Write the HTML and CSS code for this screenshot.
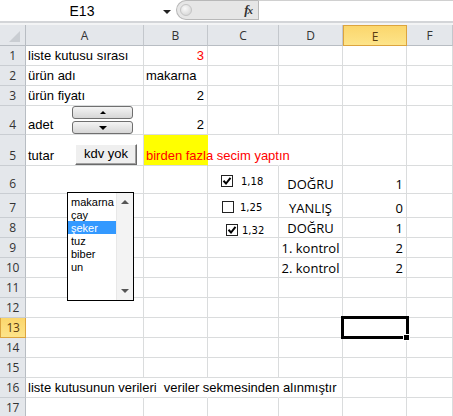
FILE: index.html
```html
<!DOCTYPE html>
<html lang="tr">
<head>
<meta charset="utf-8">
<title>Sheet</title>
<link rel="stylesheet" href="styles.css">
</head>
<body>
<div class="app">
  <div class="toolbar">
    <div class="namebox"><span class="nb-text">E13</span><span class="nb-arrow"></span></div>
    <div class="fxarea"><span class="knob"></span><span class="fx">f<span class="fxx">x</span></span></div>
    <div class="formula"></div>
  </div>
  <div class="sheet">
    <div class="row hdr">
      <div class="corner"><svg width="25" height="20" viewBox="0 0 25 20"><polygon points="20,6 20,17 9,17" fill="#c9cdd2"/></svg></div>
      <div class="ch">A</div><div class="ch">B</div><div class="ch">C</div><div class="ch">D</div><div class="ch sel">E</div><div class="ch">F</div>
    </div>
    <div class="row h20">
      <div class="rh">1</div><div class="c">liste kutusu sırası</div><div class="c num red">3</div><div class="c"></div><div class="c"></div><div class="c"></div><div class="c"></div>
    </div>
    <div class="row h20">
      <div class="rh">2</div><div class="c">ürün adı</div><div class="c">makarna</div><div class="c"></div><div class="c"></div><div class="c"></div><div class="c"></div>
    </div>
    <div class="row h20">
      <div class="rh">3</div><div class="c">ürün fiyatı</div><div class="c num">2</div><div class="c"></div><div class="c"></div><div class="c"></div><div class="c"></div>
    </div>
    <div class="row h29">
      <div class="rh">4</div><div class="c">adet</div><div class="c num">2</div><div class="c"></div><div class="c"></div><div class="c"></div><div class="c"></div>
    </div>
    <div class="row h31">
      <div class="rh">5</div><div class="c">tutar</div><div class="c yellow red nob">birden fazla secim yaptın</div><div class="c nob"></div><div class="c"></div><div class="c"></div><div class="c"></div>
    </div>
    <div class="row h28">
      <div class="rh">6</div><div class="c"></div><div class="c"></div><div class="c"></div><div class="c ctr cal">DOĞRU</div><div class="c num cal">1</div><div class="c"></div>
    </div>
    <div class="row h24">
      <div class="rh">7</div><div class="c"></div><div class="c"></div><div class="c"></div><div class="c ctr cal">YANLIŞ</div><div class="c num cal">0</div><div class="c"></div>
    </div>
    <div class="row h20">
      <div class="rh">8</div><div class="c"></div><div class="c"></div><div class="c"></div><div class="c ctr cal">DOĞRU</div><div class="c num cal">1</div><div class="c"></div>
    </div>
    <div class="row h20">
      <div class="rh">9</div><div class="c"></div><div class="c"></div><div class="c"></div><div class="c ctr cal">1. kontrol</div><div class="c num cal">2</div><div class="c"></div>
    </div>
    <div class="row h20">
      <div class="rh">10</div><div class="c"></div><div class="c"></div><div class="c"></div><div class="c ctr cal">2. kontrol</div><div class="c num cal">2</div><div class="c"></div>
    </div>
    <div class="row h20">
      <div class="rh">11</div><div class="c"></div><div class="c"></div><div class="c"></div><div class="c"></div><div class="c"></div><div class="c"></div>
    </div>
    <div class="row h20">
      <div class="rh">12</div><div class="c"></div><div class="c"></div><div class="c"></div><div class="c"></div><div class="c"></div><div class="c"></div>
    </div>
    <div class="row h20">
      <div class="rh sel">13</div><div class="c"></div><div class="c"></div><div class="c"></div><div class="c"></div><div class="c"></div><div class="c"></div>
    </div>
    <div class="row h20">
      <div class="rh">14</div><div class="c"></div><div class="c"></div><div class="c"></div><div class="c"></div><div class="c"></div><div class="c"></div>
    </div>
    <div class="row h20">
      <div class="rh">15</div><div class="c"></div><div class="c"></div><div class="c"></div><div class="c"></div><div class="c"></div><div class="c"></div>
    </div>
    <div class="row h20">
      <div class="rh">16</div><div class="c nob">liste kutusunun verileri&nbsp; veriler sekmesinden alınmıştır</div><div class="c nob"></div><div class="c nob"></div><div class="c"></div><div class="c"></div><div class="c"></div>
    </div>
    <div class="row h20">
      <div class="rh">17</div><div class="c"></div><div class="c"></div><div class="c"></div><div class="c"></div><div class="c"></div><div class="c"></div>
    </div>

    <div class="spin">
      <div class="spin-btn"><span class="tri-up"></span></div>
      <div class="spin-btn"><span class="tri-down"></span></div>
    </div>
    <div class="kdv">kdv yok</div>

    <div class="listbox">
      <ul class="items">
        <li>makarna</li>
        <li>çay</li>
        <li class="hl">şeker</li>
        <li>tuz</li>
        <li>biber</li>
        <li>un</li>
      </ul>
      <div class="scroll"><span class="s-up"></span><span class="s-down"></span></div>
    </div>

    <div class="chk chk1"><span class="box on"><svg width="10" height="10" viewBox="0 0 10 10"><path d="M1.5 4.8 L4 7.5 L8.5 1.8" fill="none" stroke="#000" stroke-width="2"/></svg></span><span class="lbl">1,18</span></div>
    <div class="chk chk2"><span class="box"></span><span class="lbl">1,25</span></div>
    <div class="chk chk3"><span class="box on"><svg width="10" height="10" viewBox="0 0 10 10"><path d="M1.5 4.8 L4 7.5 L8.5 1.8" fill="none" stroke="#000" stroke-width="2"/></svg></span><span class="lbl">1,32</span></div>

    <div class="selbox"></div>
    <div class="handle"></div>
  </div>
</div>
</body>
</html>
```

FILE: styles.css
```css
html, body {
  margin: 0;
  padding: 0;
  background: #fff;
}
.app {
  width: 453px;
  height: 416px;
  overflow: hidden;
  font-family: "Liberation Sans", Arial, sans-serif;
}
.toolbar {
  height: 21px;
  display: flex;
  border-bottom: 2px solid #d3d5d8;
  margin-bottom: 2px;
  box-shadow: 0 2px 0 #f3f4f5;
}
.namebox {
  width: 176px;
  background: #fff;
  position: relative;
  display: flex;
  align-items: center;
  justify-content: center;
  padding-right: 12px;
  box-sizing: border-box;
}
.nb-text {
  font-size: 14px;
  color: #000;
  line-height: 16px;
}
.nb-arrow {
  position: absolute;
  left: 163px;
  top: 10px;
  border-left: 4px solid transparent;
  border-right: 4px solid transparent;
  border-top: 4px solid #222;
}
.fxarea {
  width: 82px;
  height: 20px;
  box-sizing: border-box;
  background: #e6e6e6;
  border: 1px solid #b8b8b8;
  border-right: none;
  border-radius: 10px 0 0 10px;
  display: flex;
  align-items: center;
  justify-content: space-between;
  padding: 0 6px 0 3px;
  margin-top: 0;
}
.knob {
  width: 10px;
  height: 10px;
  border-radius: 50%;
  background: radial-gradient(circle at 40% 35%, #fafafa, #cfcfcf);
  border: 1px solid #c4c4c4;
}
.fx {
  font-family: "Liberation Serif", serif;
  font-style: italic;
  font-weight: bold;
  font-size: 13px;
  color: #333;
  letter-spacing: -1px;
}
.fxx {
  font-size: 11px;
}
.formula {
  flex: 1;
  height: 20px;
  box-sizing: border-box;
  background: #fff;
  border-left: 1px solid #b8b8b8;
  border-top: 1px solid #d0d0d0;
}
.sheet {
  position: relative;
}
.row {
  display: grid;
  grid-template-columns: 26px 118px 64px 71px 64px 64px 1fr;
}
.hdr { height: 21px; }
.h20 { height: 20px; }
.h24 { height: 24px; }
.h28 { height: 28px; }
.h29 { height: 29px; }
.h31 { height: 31px; }
.corner, .ch, .rh {
  box-sizing: border-box;
  background: #e4e7eb;
  font-family: "Open Sans", sans-serif;
  font-size: 12px;
  color: #333;
}
.corner {
  border-right: 1px solid #b8bdc3;
  border-bottom: 1px solid #b8bdc3;
}
.corner svg { display: block; }
.ch {
  border-right: 1px solid #c3c7cc;
  border-bottom: 1px solid #b8bdc3;
  display: flex;
  align-items: center;
  justify-content: center;
  padding-top: 1px;
}
.rh {
  border-right: 1px solid #b8bdc3;
  border-bottom: 1px solid #c9cdd2;
  display: flex;
  align-items: flex-end;
  justify-content: center;
  line-height: 16px;
  padding-bottom: 1px;
  letter-spacing: -0.3px;
}
.ch.sel, .rh.sel {
  background: linear-gradient(#fbd66c, #fde48a);
  border: 1px solid #dca43e;
  color: #5a3c10;
}
.rh.sel { border-top: none; }
.c {
  box-sizing: border-box;
  border-right: 1px solid #dadcdd;
  border-bottom: 1px solid #dadcdd;
  display: flex;
  align-items: flex-end;
  padding: 0 3px 1px 2px;
  font-size: 13px;
  line-height: 16px;
  color: #000;
  white-space: nowrap;
  min-width: 0;
}
.c.num { justify-content: flex-end; }
.c.ctr { justify-content: center; padding: 0 0 1px 0; }
.c.cal {
  font-family: "Open Sans", sans-serif;
  font-size: 13px;
}
.c.red { color: #ff0000; }
.c.yellow { background: #ffff00; }
.c.nob { border-right-color: transparent; }

/* form controls */
.spin {
  position: absolute;
  left: 72px;
  top: 81px;
  width: 61px;
  display: flex;
  flex-direction: column;
  gap: 2px;
}
.spin-btn {
  height: 13px;
  box-sizing: border-box;
  border: 1px solid #6f6f6f;
  border-radius: 3px;
  background: linear-gradient(#f4f4f4, #d6d6d6);
  display: flex;
  align-items: center;
  justify-content: center;
}
.tri-up {
  border-left: 3px solid transparent;
  border-right: 3px solid transparent;
  border-bottom: 3px solid #000;
}
.tri-down {
  border-left: 4px solid transparent;
  border-right: 4px solid transparent;
  border-top: 4px solid #000;
}
.kdv {
  position: absolute;
  left: 75px;
  top: 119px;
  width: 62px;
  height: 21px;
  box-sizing: border-box;
  background: #efefef;
  border: 1px solid;
  border-color: #fff #6a6a6a #6a6a6a #fff;
  box-shadow: inset -1px -1px 0 #a0a0a0;
  font-size: 13px;
  line-height: 18px;
  text-align: center;
  color: #000;
}
.listbox {
  position: absolute;
  left: 67px;
  top: 167px;
  width: 67px;
  height: 109px;
  box-sizing: border-box;
  border: 1px solid #000;
  background: #fff;
  display: flex;
}
.items {
  list-style: none;
  margin: 0;
  padding: 2px 0 0 0;
  flex: 1;
}
.items li {
  height: 13px;
  line-height: 14px;
  font-size: 11px;
  padding-left: 3px;
  color: #000;
}
.items li.hl {
  background: #3399ff;
  color: #fff;
}
.scroll {
  width: 16px;
  background: #f3f3f3;
  border-left: 1px solid #e8e8e8;
  position: relative;
}
.s-up, .s-down {
  position: absolute;
  left: 4px;
  border-left: 4px solid transparent;
  border-right: 4px solid transparent;
}
.s-up {
  top: 7px;
  border-bottom: 4px solid #555;
}
.s-down {
  bottom: 7px;
  border-top: 4px solid #555;
}
.chk {
  position: absolute;
  display: flex;
  align-items: center;
  gap: 8px;
}
.chk1 { left: 221px; top: 150px; }
.chk2 { left: 222px; top: 176px; gap: 6px; }
.chk3 { left: 226px; top: 199px; gap: 4px; }
.box {
  width: 12px;
  height: 12px;
  box-sizing: border-box;
  border: 1px solid #222;
  background: #fff;
  display: flex;
  align-items: center;
  justify-content: center;
}
.lbl {
  font-family: "DejaVu Sans", sans-serif;
  font-size: 10px;
  color: #000;
}
.selbox {
  position: absolute;
  left: 341px;
  top: 291px;
  width: 68px;
  height: 23px;
  box-sizing: border-box;
  border: 3px solid #000;
}
.handle {
  position: absolute;
  left: 403px;
  top: 309px;
  width: 5px;
  height: 5px;
  background: #000;
  border: 1px solid #fff;
}
```
